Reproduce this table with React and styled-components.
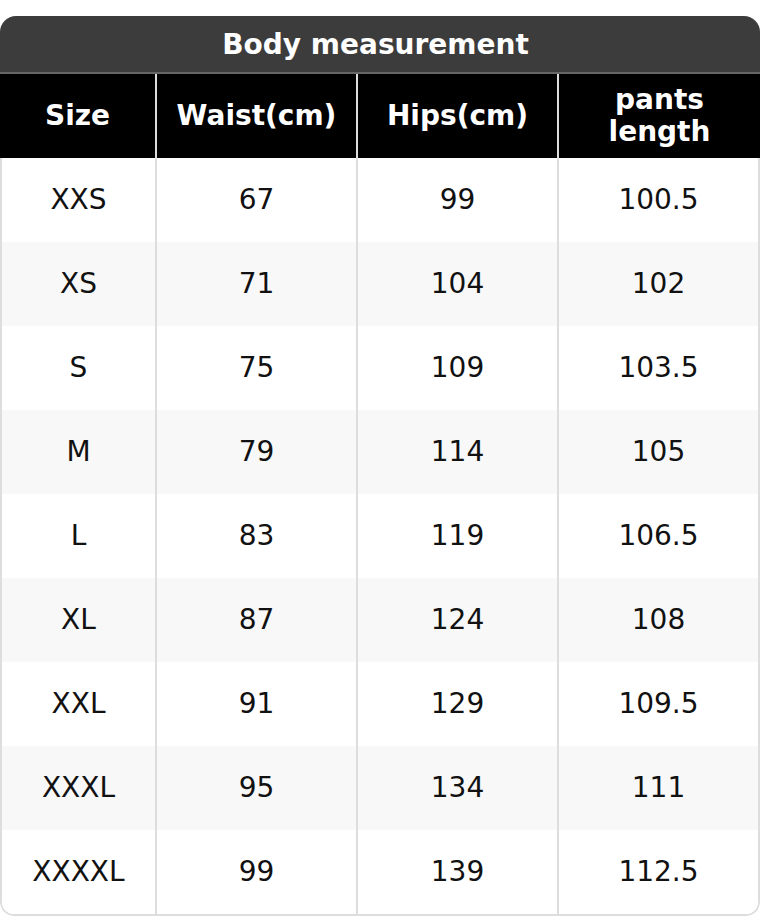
import React from 'react'
import styled, { createGlobalStyle } from 'styled-components'

const GlobalStyle = createGlobalStyle`
  body {
    margin: 0;
    background: #fff;
    font-family: "DejaVu Sans", Verdana, sans-serif;
  }
`

const Card = styled.div`
  margin-top: 16px;
  width: 760px;
  border-radius: 16px 16px 14px 14px;
  overflow: hidden;
`

const Title = styled.div`
  height: 56px;
  display: flex;
  align-items: center;
  justify-content: center;
  padding-right: 9px;
  background: #3c3c3c;
  border-bottom: 2px solid #666;
  color: #fff;
  font-size: 28px;
  font-weight: bold;
`

const Row = styled.div`
  display: grid;
  grid-template-columns: 155px 201px 201px 203px;
  height: 84px;
  background: ${(p) => (p.$head ? '#000' : p.$alt ? '#f8f8f8' : '#fff')};
`

const Body = styled.div`
  border: 2px solid #ddd;
  border-top: none;
  border-radius: 0 0 14px 14px;
  overflow: hidden;

  ${Row} {
    grid-template-columns: 153px 201px 201px 201px;
  }
`

const Cell = styled.div`
  display: flex;
  align-items: center;
  justify-content: center;
  text-align: center;
  padding: 0 12px;
  font-size: 28px;
  line-height: 1.15;
  color: ${(p) => (p.$head ? '#fff' : '#111')};
  font-weight: ${(p) => (p.$head ? 'bold' : 'normal')};

  & + & {
    border-left: 2px solid ${(p) => (p.$head ? '#5a5a5a' : '#ddd')};
  }
`

const headers = ['Size', 'Waist(cm)', 'Hips(cm)', 'pants length']

const rows = [
  ['XXS', '67', '99', '100.5'],
  ['XS', '71', '104', '102'],
  ['S', '75', '109', '103.5'],
  ['M', '79', '114', '105'],
  ['L', '83', '119', '106.5'],
  ['XL', '87', '124', '108'],
  ['XXL', '91', '129', '109.5'],
  ['XXXL', '95', '134', '111'],
  ['XXXXL', '99', '139', '112.5'],
]

const App = () => {
  return (
    <>
      <GlobalStyle />
      <Card>
        <Title>Body measurement</Title>
        <Row $head>
          {headers.map((h) => (
            <Cell key={h} $head>
              {h}
            </Cell>
          ))}
        </Row>
        <Body>
          {rows.map((r, i) => (
            <Row key={r[0]} $alt={i % 2 === 1}>
              {r.map((v, j) => (
                <Cell key={j}>{v}</Cell>
              ))}
            </Row>
          ))}
        </Body>
      </Card>
    </>
  )
}

export default App
